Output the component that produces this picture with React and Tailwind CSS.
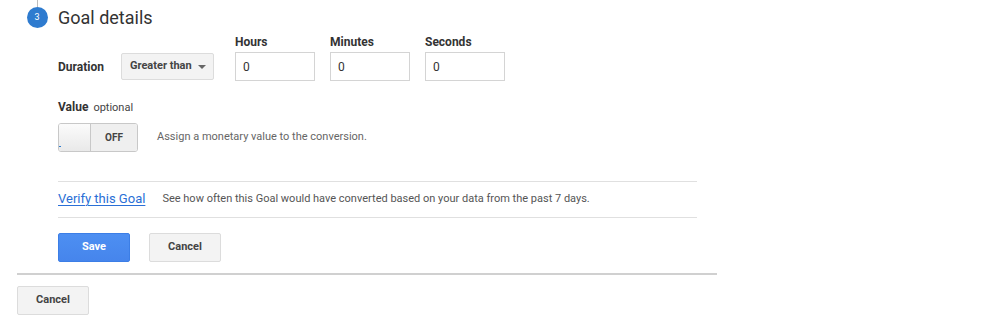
function NumberField({ label }) {
  return (
    <div className="flex flex-col">
      <span className="text-[12px] font-bold text-[#333] leading-[14px] mb-[3px]">{label}</span>
      <input
        defaultValue="0"
        className="w-[80px] h-[29px] border border-[#d4d4d4] px-[7px] text-[12px] text-[#333] outline-none"
      />
    </div>
  );
}

function GrayButton({ children }) {
  return (
    <button className="w-[72px] h-[29px] rounded-[2px] border border-[#dcdcdc] bg-[#f3f3f3] text-[11px] font-bold text-[#444]">
      {children}
    </button>
  );
}

export default function App() {
  return (
    <div className="w-[1003px] h-[325px] bg-white font-['Roboto',sans-serif] overflow-hidden">
      <div className="w-[717px] pl-[17px]">
        {/* step header */}
        <div className="flex">
          <div className="w-[41px] flex flex-col items-center pr-[1px]">
            <div className="w-px h-[7px] bg-[#bdbdbd]" />
            <div className="w-[21px] h-[21px] rounded-full bg-[#2e7bcf] flex items-center justify-center text-[9px] text-white">
              3
            </div>
          </div>
          <div className="pt-[6px] text-[18px] leading-[24px] text-[#333]">Goal details</div>
        </div>

        <div className="pl-[41px] w-[680px]">
          {/* duration */}
          <div className="flex items-end mt-[5px]">
            <div className="w-[63px] h-[29px] flex items-center text-[12px] font-bold text-[#333]">Duration</div>
            <button className="w-[93px] h-[27px] mb-[1px] flex items-center justify-between pl-[8px] pr-[7px] rounded-[2px] border border-[#dcdcdc] bg-[#f3f3f3] text-[11px] font-bold text-[#444]">
              Greater than
              <svg width="8" height="4" viewBox="0 0 8 4"><path d="M0 0h8L4 4z" fill="#666" /></svg>
            </button>
            <div className="flex gap-[15px] ml-[21px]">
              <NumberField label="Hours" />
              <NumberField label="Minutes" />
              <NumberField label="Seconds" />
            </div>
          </div>

          {/* value */}
          <div className="mt-[17px] flex items-baseline gap-[5px]">
            <span className="text-[12px] font-bold text-[#333]">Value</span>
            <span className="text-[11px] text-[#444]">optional</span>
          </div>
          <div className="mt-[6px] flex items-center">
            <div className="relative flex w-[80px] h-[29px] rounded-[3px] border border-[#c8c8c8] overflow-hidden">
              <div className="w-[32px] h-full bg-gradient-to-b from-[#fbfbfb] to-[#e9e9e9] border-r border-[#c8c8c8]" />
              <div className="flex-1 flex items-center justify-center bg-[#efefef] text-[10px] font-bold text-[#444]">OFF</div>
              <div className="absolute left-0 bottom-[4px] w-[2px] h-px bg-[#2e7bcf]" />
            </div>
            <span className="ml-[19px] text-[11px] text-[#666]">Assign a monetary value to the conversion.</span>
          </div>

          {/* verify */}
          <div className="mt-[29px] w-[639px] border-t border-b border-[#e0e0e0] h-[37px] flex items-center">
            <a href="#" className="text-[13px] text-[#2a6fd6] underline underline-offset-2 pr-[4px]">
              Verify this Goal
            </a>
            <span className="ml-[13px] text-[11px] text-[#555]">
              See how often this Goal would have converted based on your data from the past 7 days.
            </span>
          </div>

          {/* actions */}
          <div className="mt-[15px] flex gap-[19px]">
            <button className="w-[72px] h-[29px] rounded-[2px] border border-[#3c7ee6] bg-gradient-to-b from-[#4d8ff2] to-[#4685ec] text-[11px] font-bold text-white">
              Save
            </button>
            <GrayButton>Cancel</GrayButton>
          </div>
        </div>

        <div className="mt-[11px] h-[2px] bg-[#d0d0d0]" />
        <div className="mt-[11px]">
          <GrayButton>Cancel</GrayButton>
        </div>
      </div>
    </div>
  );
}
